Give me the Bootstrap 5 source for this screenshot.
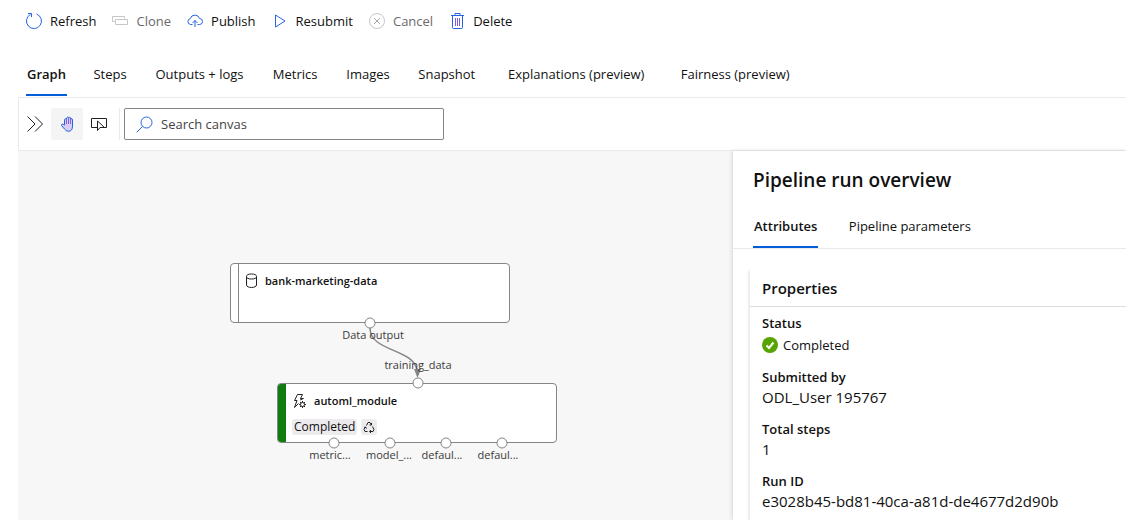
<!DOCTYPE html>
<html lang="en">
<head>
<meta charset="utf-8">
<meta name="viewport" content="width=device-width, initial-scale=1">
<title>Pipeline run</title>
<link href="https://cdn.jsdelivr.net/npm/bootstrap@5.3.0/dist/css/bootstrap.min.css" rel="stylesheet">
<style>
  body { font-family: "Open Sans", "Noto Sans", sans-serif; font-size: 13px; line-height: 20px; color: #111; }
  button, input { font: inherit; color: inherit; }
  svg { flex: none; fill: none; stroke-width: 1; }
  .plain { background: none; border: 0; padding: 0; }
  .commands { padding: 11px 26px; gap: 16px; }
  .commands .plain { gap: 8px; }
  .commands .plain:disabled { color: #6b696b; }
  .blue { stroke: #2563e0; }
  .gray { stroke: #c8c6c8; }
  .dark { stroke: #222; }
  .tabs { gap: 25px; }
  .tabs a { color: #111; text-decoration: none; text-align: center; white-space: nowrap; padding: 10px 1px 8px; border-bottom: 2px solid transparent; line-height: 24px; }
  .tabs a.preview { padding-left: 3px; padding-right: 3px; }
  .tabs a::after { content: attr(data-label); display: block; height: 0; overflow: hidden; visibility: hidden; font-weight: 600; }
  .tabs a.active { font-weight: 600; border-color: #015cda; }
  .main-tabs { padding: 10px 26px 1px; }
  .workspace { margin-left: 18px; border-top: 1px solid #eaeaea; }
  .canvas-tools { height: 53px; border-left: 1px solid #eaeaea; border-bottom: 1px solid #eaeaea; }
  .tool { width: 32px; height: 32px; display: grid; place-items: center; }
  .tool.active { background: #f5f4f5; border-radius: 2px; }
  .search { width: 320px; height: 32px; border: 1px solid #858585; border-radius: 2px; gap: 8px; padding: 0 11px; color: #333; }
  .search input { border: 0; outline: 0; background: none; padding: 0; min-width: 0; }
  .search input::placeholder { color: #444; opacity: 1; }
  .divider { width: 1px; height: 32px; background: #eaeaea; margin: 0 4px; }
  .canvas { background: #f7f7f7; min-height: 368px; overflow: hidden; font-size: 11px; line-height: 16px; color: #3b3a39; }
  .wire { left: 0; top: 0; }
  .node { width: 280px; height: 60px; background: #fff; border: 1px solid #858585; border-radius: 4px; color: #111; }
  .node .stripe { width: 8px; border-right: 1px solid #858585; }
  .node .stripe.done { background: #107c10; border-color: #107c10; border-radius: 3px 0 0 3px; }
  .node-title { font-weight: 600; gap: 7px; }
  .node-body { padding: 9px 6px; gap: 10px; }
  .chip { background: #edebed; border-radius: 3px; padding: 0 2px; height: 16px; font-size: 12px; }
  .port { width: 11px; height: 11px; border: 1px solid #858585; border-radius: 50%; background: #fff; transform: translate(-50%, -50%); }
  .port-label { transform: translateX(-50%); white-space: nowrap; }
  .details { flex: 0 0 393px; box-shadow: -1px 0 4px #0002; background: #fff; }
  .details h1 { font-size: 19px; line-height: 24px; font-weight: 600; margin: 0; padding: 17px 20px 11px; }
  .details .tabs { padding: 1px 20px 0; border-bottom: 1px solid #eaeaea; gap: 27px; }
  .properties { margin: 20px 0 0 17px; box-shadow: -1px 2px 3px #0002; }
  .properties h2 { font-size: 15px; line-height: 20px; font-weight: 600; margin: 0; padding: 9px 12px 8px; border-bottom: 1px solid #dcdcdc; }
  .properties dl { padding: 6px 12px 8px; }
  .properties dt { font-weight: 600; }
  .properties dd { margin: 0 0 12px; font-size: 15px; }
  .properties dd.state { font-size: 13px; padding-top: 2px; gap: 5px; }
</style>
</head>
<body class="d-flex flex-column min-vh-100">
<div class="commands d-flex flex-wrap" role="toolbar" aria-label="Run commands">
  <button type="button" class="plain d-flex align-items-center"><svg class="blue" width="16" height="18" viewBox="0 0 16 18"><path d="M10.500 2A7.500 7.500 0 1 1 4.500 2.400M2 1.500H5.500V5"/></svg>Refresh</button>
  <button type="button" class="plain d-flex align-items-center" disabled><svg class="gray" width="16" height="16" viewBox="0 0 16 16"><path d="M3.500 8.500H.5V3.500H12.500V5.500M3.500 6.500H15.500V11.500H3.500Z"/></svg>Clone</button>
  <button type="button" class="plain d-flex align-items-center"><svg class="blue" width="16" height="16" viewBox="0 0 16 16"><path d="M5.500 11.500H3.500A3 3 0 0 1 3.300 5.600A4.800 4.800 0 0 1 12.500 5.500A3 3 0 0 1 12.500 11.500H10.500M8 14V7.500M5.500 10L8 7.500L10.500 10"/></svg>Publish</button>
  <button type="button" class="plain d-flex align-items-center"><svg class="blue" width="16" height="16" viewBox="-3 0 16 16"><path d="M.5 2L10 8L.5 14Z"/></svg>Resubmit</button>
  <button type="button" class="plain d-flex align-items-center" disabled><svg class="gray" width="16" height="16" viewBox="0 0 16 16"><circle cx="8" cy="8" r="7.500"/><path d="M5 5L11 11M11 5L5 11" stroke="#a9a7a9"/></svg>Cancel</button>
  <button type="button" class="plain d-flex align-items-center"><svg class="blue" width="16" height="18" viewBox="0 0 16 18"><path d="M2 3.500H15M3.500 3.500V15.500Q3.500 16.500 4.500 16.500H12.500Q13.500 16.500 13.500 15.500V3.500M6 3V1.500H11V3"/><path d="M6.500 6V14M8.500 6V14M10.500 6V14" stroke="#7a5fe0"/></svg>Delete</button>
</div>
<nav class="tabs main-tabs d-flex" aria-label="Run views">
  <a href="#" class="active" data-label="Graph" aria-current="page">Graph</a>
  <a href="#" data-label="Steps">Steps</a>
  <a href="#" data-label="Outputs + logs">Outputs + logs</a>
  <a href="#" data-label="Metrics">Metrics</a>
  <a href="#" data-label="Images">Images</a>
  <a href="#" data-label="Snapshot">Snapshot</a>
  <a href="#" class="preview" data-label="Explanations (preview)">Explanations (preview)</a>
  <a href="#" class="preview" data-label="Fairness (preview)">Fairness (preview)</a>
</nav>
<main class="workspace d-flex flex-column flex-grow-1">
  <div class="canvas-tools d-flex align-items-center">
    <button type="button" class="plain tool" aria-label="Expand panel"><svg class="dark" width="16" height="16" viewBox="0 0 16 16"><path d="M.5 .5L8 8L.5 15.500M8 .5L15.500 8L8 15.500"/></svg></button>
    <button type="button" class="plain tool active" aria-label="Pan canvas"><svg class="blue" width="16" height="16" viewBox="0 0 16 16"><path d="M5.500 9V3.500Q6 2 7.500 3.500V2Q8.500 .2 9.500 2V1.500Q10.500 .2 11.500 2V3Q13.500 1.800 13.500 4V10Q13.500 15.300 9.500 15.300Q7 15.300 5.500 13L2.500 9.500Q2.500 7.700 4.200 8.200Z" fill="#d8ccf8"/><path d="M7.500 3.500V8M9.500 2V8M11.500 2.500V8" stroke="#8660df"/></svg></button>
    <button type="button" class="plain tool" aria-label="Select items"><svg class="dark" width="17" height="16" viewBox="0 0 17 16"><path d="M6 11.500H.5V2.500H15.500V11.500H13M6.500 5V14.500L9 11.500H13.500Z"/></svg></button>
    <span class="divider"></span>
    <label class="search d-flex align-items-center"><svg class="blue" width="17" height="17" viewBox="0 0 17 17"><circle cx="10.500" cy="6.500" r="5.500"/><path d="M6.500 10.500L.7 16.300"/></svg><input type="search" class="flex-grow-1" placeholder="Search canvas" aria-label="Search canvas"></label>
  </div>
  <div class="d-flex flex-grow-1">
    <section class="canvas position-relative flex-grow-1" aria-label="Pipeline graph">
      <div class="node position-absolute d-flex" style="left:212px;top:112px">
        <span class="stripe"></span>
        <div class="node-body d-flex flex-column">
          <div class="node-title d-flex align-items-center"><svg class="dark" width="13" height="16" viewBox="0 0 13 16"><ellipse cx="6.500" cy="3.500" rx="5" ry="2.500"/><path d="M1.500 3.500V12C1.500 15.300 11.500 15.300 11.500 12V3.500"/></svg>bank-marketing-data</div>
        </div>
      </div>
      <div class="node position-absolute d-flex" style="left:259px;top:232px">
        <span class="stripe done"></span>
        <div class="node-body d-flex flex-column">
          <div class="node-title d-flex align-items-center"><svg class="dark" width="15" height="16" viewBox="0 0 15 16"><path d="M8 7L11.500 5.500H8.500L10.500 1.500H5.500L2.500 7.500H5L2.500 14.500L6.500 10.500"/><circle cx="10.500" cy="11.500" r="2"/><path d="M10.500 8V9.500M10.500 13.500V15M7 11.500H8.500M12.500 11.500H14M8 9L9 10M12 13L13 14M13 9L12 10M9 13L8 14"/></svg>automl_module</div>
          <div class="d-flex gap-1"><span class="chip">Completed</span><span class="chip d-flex align-items-center"><svg class="dark" width="12" height="12" viewBox="0 0 12 12"><path d="M3.500 4.500L5 1.500H7L8.500 4M6.500 4H8.500V2M9.500 5.500L11 8.500L10 10.500H7M8 9L6.500 10.500L8 12M4.500 10.500H2L1 8.500L2.500 6M1 6.500L2.500 6L3.500 7.500"/></svg></span></div>
        </div>
      </div>
      <svg class="wire position-absolute" width="560" height="369" viewBox="0 0 560 369"><path d="M352 177C352 201 395 197 399 219" stroke="#858585" stroke-width="1.500"/><path d="M396 218H403L399.500 227Z" fill="#858585"/></svg>
      <span class="port position-absolute" style="left:352px;top:172px"></span>
      <span class="port position-absolute" style="left:400px;top:232px"></span>
      <span class="port position-absolute" style="left:316px;top:292px"></span>
      <span class="port position-absolute" style="left:372px;top:292px"></span>
      <span class="port position-absolute" style="left:428px;top:292px"></span>
      <span class="port position-absolute" style="left:484px;top:292px"></span>
      <span class="port-label position-absolute" style="left:355px;top:176px">Data output</span>
      <span class="port-label position-absolute" style="left:400px;top:206px">training_data</span>
      <span class="port-label position-absolute" style="left:312px;top:296px">metric...</span>
      <span class="port-label position-absolute" style="left:371px;top:296px">model_...</span>
      <span class="port-label position-absolute" style="left:424px;top:296px">defaul...</span>
      <span class="port-label position-absolute" style="left:480px;top:296px">defaul...</span>
    </section>
    <aside class="details position-relative d-flex flex-column">
      <h1>Pipeline run overview</h1>
      <nav class="tabs d-flex" aria-label="Run details">
        <a href="#" class="active" data-label="Attributes" aria-current="page">Attributes</a>
        <a href="#" data-label="Pipeline parameters">Pipeline parameters</a>
      </nav>
      <section class="properties flex-grow-1">
        <h2>Properties</h2>
        <dl class="mb-0">
          <dt>Status</dt>
          <dd class="state d-flex align-items-center"><svg width="16" height="16" viewBox="0 0 16 16"><circle cx="8" cy="8" r="8" fill="#57a300"/><path d="M4.500 8.500L7 11L11.500 5.500" stroke="#fff" stroke-width="2"/></svg>Completed</dd>
          <dt>Submitted by</dt>
          <dd>ODL_User 195767</dd>
          <dt>Total steps</dt>
          <dd>1</dd>
          <dt>Run ID</dt>
          <dd class="mb-0">e3028b45-bd81-40ca-a81d-de4677d2d90b</dd>
        </dl>
      </section>
    </aside>
  </div>
</main>
<script src="https://cdn.jsdelivr.net/npm/bootstrap@5.3.0/dist/js/bootstrap.bundle.min.js"></script>
</body>
</html>
